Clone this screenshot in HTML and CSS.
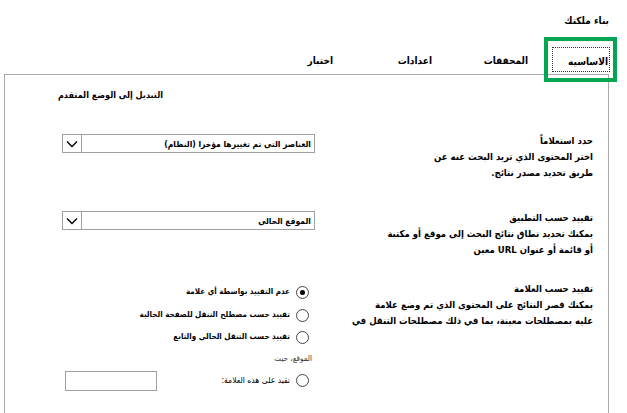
FILE: index.html
```html
<!DOCTYPE html>
<html lang="ar" dir="rtl">
<head>
<meta charset="utf-8">
<title>بناء ملكتك</title>
<link rel="stylesheet" href="styles.css">
</head>
<body>
<div class="page">
  <div class="title">بناء ملكتك</div>
  <div class="tabs">
    <div class="tab tab-basic"><span class="focus">الاساسيه</span></div>
    <div class="tab tab-ref">المحققات</div>
    <div class="tab tab-set">اعدادات</div>
    <div class="tab tab-test">اختبار</div>
  </div>
  <div class="panel">
    <div class="adv-row"><span class="adv">التبديل إلى الوضع المتقدم</span></div>

    <div class="row row1">
      <div class="label">
        <div class="head">حدد استعلاماً</div>
        <div>اختر المحتوى الذي تريد البحث عنه عن</div>
        <div>طريق تحديد مصدر نتائج.</div>
      </div>
      <div class="control">
        <div class="select"><span class="sel-text">العناصر التي تم تغييرها مؤخرا (النظام)</span><span class="sel-btn"><svg width="12" height="8" viewBox="0 0 12 8"><path d="M1 1.5 L6 6.5 L11 1.5" fill="none" stroke="#000" stroke-width="1.4"/></svg></span></div>
      </div>
    </div>

    <div class="row row2">
      <div class="label">
        <div class="head">تقييد حسب التطبيق</div>
        <div>يمكنك تحديد نطاق نتائج البحث إلى موقع أو مكتبة</div>
        <div>أو قائمة أو عنوان URL معين</div>
      </div>
      <div class="control">
        <div class="select"><span class="sel-text">الموقع الحالي</span><span class="sel-btn"><svg width="12" height="8" viewBox="0 0 12 8"><path d="M1 1.5 L6 6.5 L11 1.5" fill="none" stroke="#000" stroke-width="1.4"/></svg></span></div>
      </div>
    </div>

    <div class="row row3">
      <div class="label">
        <div class="head">تقييد حسب العلامة</div>
        <div>يمكنك قصر النتائج على المحتوى الذي تم وضع علامة</div>
        <div>عليه بمصطلحات معينة، بما في ذلك مصطلحات التنقل في</div>
      </div>
      <div class="control">
        <div class="radio r1"><span class="dot checked"></span><span>عدم التقييد بواسطة أي علامة</span></div>
        <div class="radio r2"><span class="dot"></span><span>تقييد حسب مصطلح التنقل للصفحة الحالية</span></div>
        <div class="radio r3"><span class="dot"></span><span>تقييد حسب التنقل الحالي والتابع</span></div>
        <div class="note">الموقع، حيث</div>
        <div class="radio r4"><span class="dot"></span><span class="r4-text">تقيد على هذه العلامة:</span><span class="textbox"></span></div>
      </div>
    </div>
  </div>
</div>
</body>
</html>
```

FILE: styles.css
```css
html, body {
  margin: 0;
  padding: 0;
  background: #fff;
}
body {
  font-family: "DejaVu Sans Condensed", "DejaVu Sans", sans-serif;
  font-size: 9.5px;
  font-weight: bold;
  color: #000;
  direction: rtl;
}
.page {
  width: 627px;
  height: 413px;
  overflow: hidden;
}
.title {
  font-size: 10px;
  padding: 13px 18px 0 0;
  height: 20px;
  line-height: 16px;
  white-space: nowrap;
}
.tabs {
  display: flex;
  align-items: flex-end;
  height: 41px;
}
.tab {
  font-size: 10px;
  line-height: 16px;
  padding-bottom: 5px;
  white-space: nowrap;
  text-align: right;
}
.tab-basic {
  margin-right: 17px;
  width: 58px;
  height: 41px;
  box-sizing: border-box;
  position: relative;
  display: flex;
  align-items: flex-end;
  padding-bottom: 2px;
}
.tab-basic::after {
  content: "";
  position: absolute;
  top: 4px;
  right: -7px;
  left: -8px;
  bottom: -8px;
  border: 4px solid #00a651;
}
.focus {
  display: block;
  width: 58px;
  height: 25px;
  box-sizing: border-box;
  border: 1px dotted #333;
  padding: 6px 1px 0 0;
  line-height: 16px;
  text-align: right;
}
.tab-ref { margin-right: 24px; width: 39px; }
.tab-set { margin-right: 57px; width: 39px; }
.tab-test { margin-right: 60px; width: 28px; }
.panel {
  margin-right: 18px;
  width: 605px;
  height: 400px;
  border: 1px solid #a9a9a9;
  box-sizing: border-box;
  padding: 12px 15px 0 0;
}
.adv-row {
  height: 16px;
  line-height: 16px;
  padding-right: 430px;
  font-size: 9px;
  white-space: nowrap;
}
.row {
  display: grid;
  grid-template-columns: 278px 253px;
  line-height: 16px;
}
.label { white-space: nowrap; }
.row1 { margin-top: 30px; }
.row2 { margin-top: 29px; }
.row3 { margin-top: 23px; }
.control {
  display: flex;
  flex-direction: column;
  align-items: stretch;
}
.select {
  width: 253px;
  height: 19px;
  border: 1px solid #a0a0a0;
  box-sizing: border-box;
  display: flex;
  align-items: center;
  justify-content: space-between;
  margin-top: 1px;
}
.sel-text {
  padding-right: 3px;
  font-size: 8.5px;
  line-height: 16px;
  white-space: nowrap;
}
.sel-btn {
  width: 18px;
  height: 17px;
  border-right: 1px solid #a0a0a0;
  display: flex;
  align-items: center;
  justify-content: center;
}
.radio {
  display: flex;
  align-items: center;
  height: 16px;
  margin-right: 6px;
  font-size: 8px;
  white-space: nowrap;
}
.r1 { margin-top: 3px; }
.r2 { margin-top: 7px; }
.r3 { margin-top: 6px; }
.r4 { margin-top: 5px; font-weight: normal; font-size: 8.5px; }
.dot {
  width: 11px;
  height: 11px;
  border: 1px solid #444;
  border-radius: 50%;
  margin-left: 6px;
  position: relative;
  flex: none;
}
.dot.checked::after {
  content: "";
  position: absolute;
  width: 5px;
  height: 5px;
  border-radius: 50%;
  background: #000;
  top: 3px;
  left: 3px;
}
.note {
  font-weight: normal;
  font-size: 8px;
  color: #333;
  margin-top: 6px;
  margin-right: 3px;
  line-height: 16px;
}
.textbox {
  width: 92px;
  height: 20px;
  border: 1px solid #a0a0a0;
  box-sizing: border-box;
  margin-right: auto;
  margin-left: 3px;
  margin-top: 1px;
}
```
